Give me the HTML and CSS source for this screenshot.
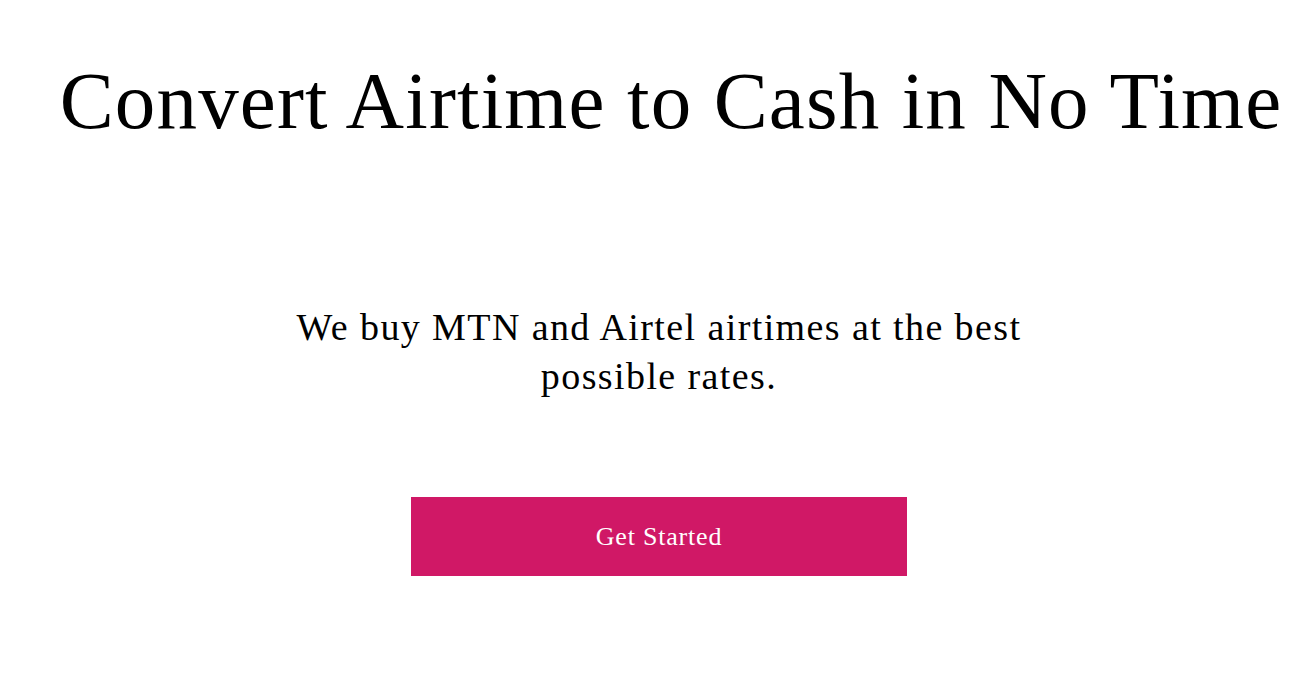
FILE: index.html
```html
<!DOCTYPE html>
<html lang="en">
<head>
<meta charset="utf-8">
<title>Convert Airtime to Cash</title>
<link rel="stylesheet" href="styles.css">
</head>
<body>
<main class="hero">
  <h1 class="hero-title">Convert Airtime to Cash in No Time</h1>
  <p class="hero-text">We buy MTN and Airtel airtimes at the best possible rates.</p>
  <a class="hero-button" href="#">Get Started</a>
</main>
</body>
</html>
```

FILE: styles.css
```css
html, body {
  margin: 0;
  padding: 0;
  background: #ffffff;
}

body {
  font-family: "Liberation Serif", "Times New Roman", serif;
  color: #000000;
  overflow: hidden;
}

.hero {
  display: flex;
  flex-direction: column;
  align-items: center;
  padding: 51px 0 0 13px;
}

.hero-title {
  margin: 0 0 0 24px;
  font-size: 81px;
  line-height: 100px;
  font-weight: 400;
  letter-spacing: 1.15px;
  white-space: nowrap;
}

.hero-text {
  margin: 152px 0 0;
  width: 760px;
  font-size: 38px;
  line-height: 49px;
  letter-spacing: 1.4px;
  text-align: center;
}

.hero-button {
  margin-top: 96px;
  width: 496px;
  height: 79px;
  display: flex;
  align-items: center;
  justify-content: center;
  background: #d01866;
  color: #ffffff;
  font-size: 26px;
  letter-spacing: 0.8px;
  text-decoration: none;
}
```
